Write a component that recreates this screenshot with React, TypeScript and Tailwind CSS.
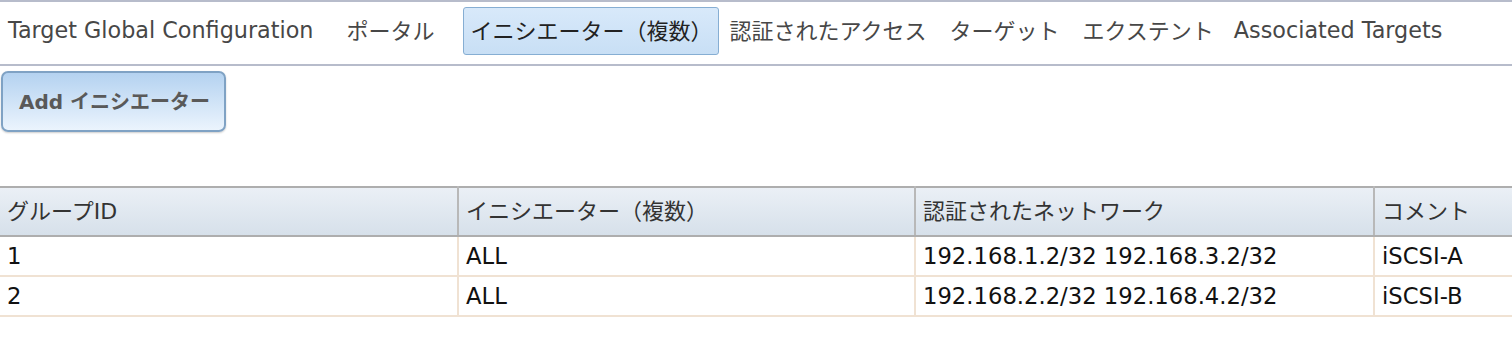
import React from "react";

const font = { fontFamily: '"DejaVu Sans", "Noto Sans CJK JP", sans-serif' };

export default function App() {
  const rows = [
    ["1", "ALL", "192.168.1.2/32 192.168.3.2/32", "iSCSI-A"],
    ["2", "ALL", "192.168.2.2/32 192.168.4.2/32", "iSCSI-B"],
  ];
  return (
    <div className="w-[1512px] h-[362px] bg-white overflow-hidden" style={font}>
      <div className="flex items-center h-[66px] pb-[4px] border-t-2 border-b-2 border-[#b7bccb] text-[22px] text-[#474747] whitespace-nowrap">
        <span className="ml-[8px] text-[22.3px]">Target Global Configuration</span>
        <span className="ml-[33px]">ポータル</span>
        <span className="ml-[28px] h-[48px] flex items-center pl-[7px] pr-[5px] border border-[#86aed3] rounded-[3px] bg-gradient-to-b from-[#d8e9fa] to-[#c8dff5] text-[#222]">イニシエーター（複数）</span>
        <span className="ml-[11px]">認証されたアクセス</span>
        <span className="ml-[23px]">ターゲット</span>
        <span className="ml-[23px]">エクステント</span>
        <span className="ml-[20px] text-[22.3px]">Associated Targets</span>
      </div>
      <div className="pt-[5px] pl-[1px]">
        <button className="w-[225px] h-[61px] border-2 border-[#7fa2c4] rounded-[7px] bg-gradient-to-b from-[#b4d2f0] to-[#ebf4fd] shadow-[0_1px_2px_rgba(0,0,0,0.2)] text-left pl-[16px] text-[20px] font-bold text-[#595959]">
          Add イニシエーター
        </button>
      </div>
      <table className="mt-[54px] w-[1512px] table-fixed border-collapse text-[22px]">
        <colgroup>
          <col className="w-[458px]" />
          <col className="w-[457px]" />
          <col className="w-[459px]" />
          <col />
        </colgroup>
        <thead>
          <tr className="h-[49px] bg-gradient-to-b from-[#ebf0f6] to-[#d6e0ea] text-[#333]">
            {["グループID", "イニシエーター（複数）", "認証されたネットワーク", "コメント"].map((h, i) => (
              <th
                key={i}
                className={`text-left font-normal pl-[7px] border-t-2 border-b-2 border-[#aeaeae] ${i < 3 ? "border-r-2 border-r-[#b8b8b8]" : ""}`}
              >
                {h}
              </th>
            ))}
          </tr>
        </thead>
        <tbody className="text-[#111] text-[22.7px]">
          {rows.map((r, ri) => (
            <tr key={ri} className="h-[40px]">
              {r.map((c, i) => (
                <td
                  key={i}
                  className={`pl-[7px] border-b-2 border-[#f0e2d3] ${i < 3 ? "border-r-2" : ""}`}
                >
                  {c}
                </td>
              ))}
            </tr>
          ))}
        </tbody>
      </table>
    </div>
  );
}
